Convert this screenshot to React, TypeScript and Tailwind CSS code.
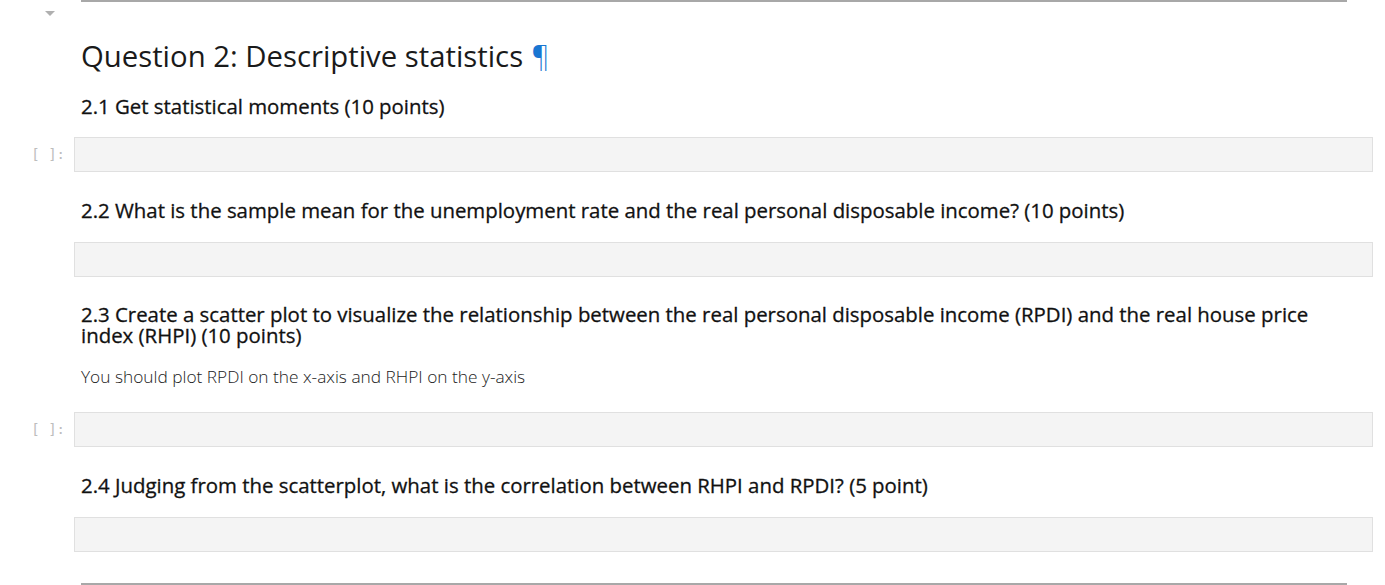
export default function App() {
  const font = { fontFamily: '"Open Sans", "Noto Sans", sans-serif' };
  return (
    <div className="w-[1385px] h-[585px] bg-white overflow-hidden text-[#212121]" style={font}>
      {/* top rule + collapse arrow */}
      <div className="flex">
        <div className="w-[81px] shrink-0 relative">
          <div className="absolute left-[45px] top-[11px] w-0 h-0 border-l-[5px] border-r-[5px] border-t-[5px] border-l-transparent border-r-transparent border-t-[#b0b0b0]" />
        </div>
        <div className="h-[2px] bg-[#a8a8a8] w-[1266px]" />
      </div>

      <MdCell className="pt-[37px]">
        <h2 className="text-[29.3px] leading-[34px] font-normal text-[#1a1a1a]">
          Question 2: Descriptive statistics <span className="text-[#1976d2] font-light">¶</span>
        </h2>
        <H4 className="leading-[24px] mt-[21px]">2.1 Get statistical moments (10 points)</H4>
      </MdCell>

      <CodeCell prompt className="mt-[19px]" />

      <MdCell className="mt-[26px]">
        <H4>2.2 What is the sample mean for the unemployment rate and the real personal disposable income? (10 points)</H4>
      </MdCell>

      <CodeCell className="mt-[20px]" />

      <MdCell className="mt-[27px]">
        <H4 className="leading-[21px]">
          2.3 Create a scatter plot to visualize the relationship between the real personal disposable income (RPDI) and the real house price
          <br />
          index (RHPI) (10 points)
        </H4>
        <p className="text-[17.3px] leading-[22px] font-light text-[#222] mt-[20px]">You should plot RPDI on the x-axis and RHPI on the y-axis</p>
      </MdCell>

      <CodeCell prompt className="mt-[24px]" />

      <MdCell className="mt-[26px]">
        <H4>2.4 Judging from the scatterplot, what is the correlation between RHPI and RPDI? (5 point)</H4>
      </MdCell>

      <CodeCell className="mt-[20px]" />

      <div className="flex mt-[31px]">
        <div className="w-[81px] shrink-0" />
        <div className="h-[2px] bg-[#a8a8a8] w-[1266px]" />
      </div>
    </div>
  );
}

function H4({ className = "leading-[24px]", children }: { className?: string; children: React.ReactNode }) {
  return (
    <h4 className={`text-[20.4px] font-normal text-[#111] [-webkit-text-stroke:0.3px_#111] ${className}`}>
      {children}
    </h4>
  );
}

function MdCell({ className = "", children }: { className?: string; children: React.ReactNode }) {
  return (
    <div className={`flex ${className}`}>
      <div className="w-[81px] shrink-0" />
      <div className="w-[1266px]">{children}</div>
    </div>
  );
}

function CodeCell({ prompt = false, className = "" }: { prompt?: boolean; className?: string }) {
  return (
    <div className={`flex items-center ${className}`}>
      <div className="w-[74px] shrink-0 pr-[9px] text-right text-[14px] text-[#bdbdbd]" style={{ fontFamily: '"DejaVu Sans Mono", monospace' }}>
        {prompt ? "[ ]:" : ""}
      </div>
      <div className="w-[1299px] h-[35px] bg-[#f4f4f4] border border-[#e0e0e0]" />
    </div>
  );
}
